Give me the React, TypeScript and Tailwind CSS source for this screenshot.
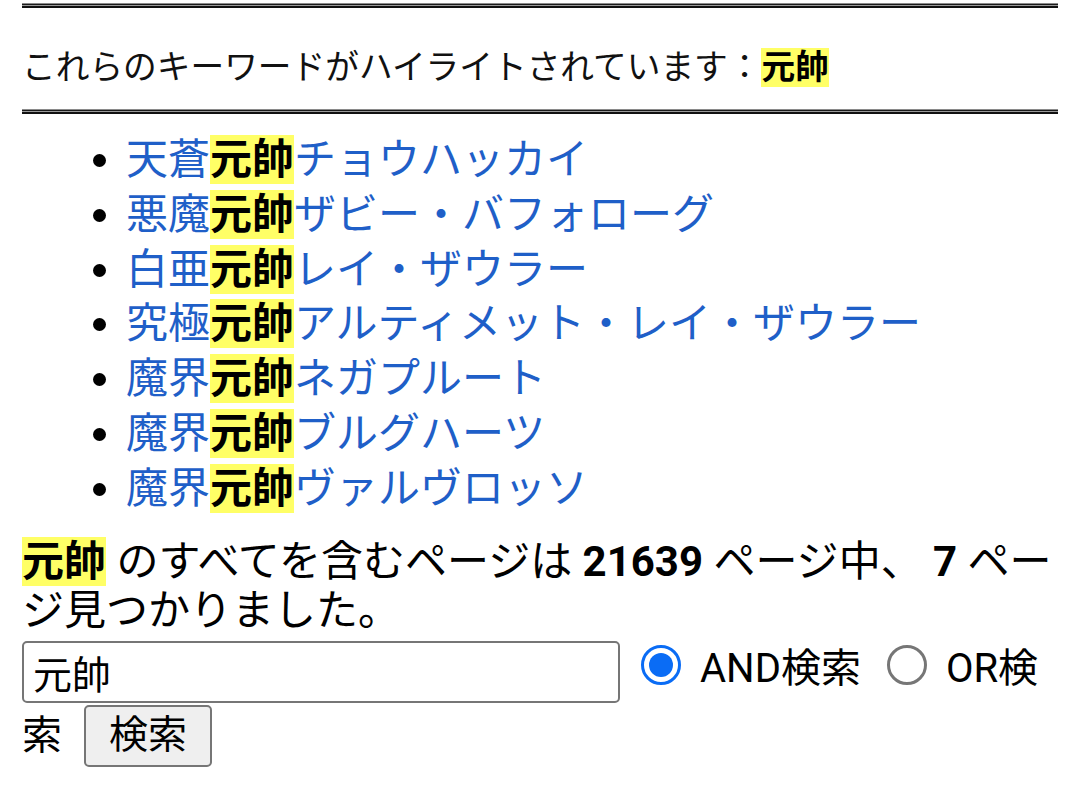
import React from 'react';

const items = [
  ['天蒼', 'チョウハッカイ'],
  ['悪魔', 'ザビー・バフォローグ'],
  ['白亜', 'レイ・ザウラー'],
  ['究極', 'アルティメット・レイ・ザウラー'],
  ['魔界', 'ネガプルート'],
  ['魔界', 'ブルグハーツ'],
  ['魔界', 'ヴァルヴロッソ'],
];

function Hr({ className = '' }: { className?: string }) {
  return (
    <div className={`h-[5px] flex flex-col ${className}`}>
      <div className="h-px bg-[#8a8a8a]" />
      <div className="h-px bg-[#1a1a1a]" />
      <div className="h-px bg-[#9a9a9a]" />
      <div className="h-[2px] bg-[#111]" />
    </div>
  );
}

function Mark({ children }: { children: React.ReactNode }) {
  return <b className="bg-[#ffff66] text-black font-bold">{children}</b>;
}

export default function App() {
  return (
    <div className="min-h-[794px] bg-white px-[22px] text-black font-['Roboto','Noto_Sans_CJK_JP',sans-serif]">
      <Hr className="mt-[3px]" />
      <p className="mt-[40px] text-[33.7px] leading-[40px] text-[#111]">
        これらのキーワードがハイライトされています：<Mark>元帥</Mark>
      </p>
      <Hr className="mt-[21px]" />

      <ul className="mt-[19px] list-disc pl-[104px] text-[42px] leading-[54.8px]">
        {items.map(([pre, post], i) => (
          <li key={i}>
            <a href="#" className="text-[#1f5fc8] no-underline">
              {pre}
              <Mark>元帥</Mark>
              {post}
            </a>
          </li>
        ))}
      </ul>

      <p className="mt-[20px] text-[42px] leading-[49px] whitespace-nowrap">
        <Mark>元帥</Mark> のすべてを含むページは <b>21639</b> ページ中、 <b>7</b> ペー
        <br />
        ジ見つかりました。
      </p>

      <form className="mt-[6px] text-[40px]" onSubmit={(e) => e.preventDefault()}>
        <div className="flex items-center h-[62px]">
          <input
            type="text"
            defaultValue="元帥"
            className="w-[598px] h-[62px] border-2 border-[#767676] rounded-[5px] px-[9px] text-[39px] outline-none"
          />
          <span className="ml-[21px] mt-[-14px] w-[40px] h-[40px] rounded-full border-[3px] border-[#0a6cf5] flex items-center justify-center">
            <span className="w-[24px] h-[24px] rounded-full bg-[#0a6cf5]" />
          </span>
          <span className="ml-[19px] mt-[-6px]">AND検索</span>
          <span className="ml-[26px] mt-[-14px] w-[40px] h-[40px] rounded-full border-[3px] border-[#767676]" />
          <span className="ml-[19px] mt-[-6px]">OR検</span>
        </div>
        <div className="flex items-center h-[62px] mt-[2px]">
          <span>索</span>
          <button
            type="submit"
            className="ml-[22px] h-[62px] px-[23px] bg-[#efefef] border-2 border-[#767676] rounded-[5px] text-[39px] leading-none"
          >
            検索
          </button>
        </div>
      </form>
    </div>
  );
}
